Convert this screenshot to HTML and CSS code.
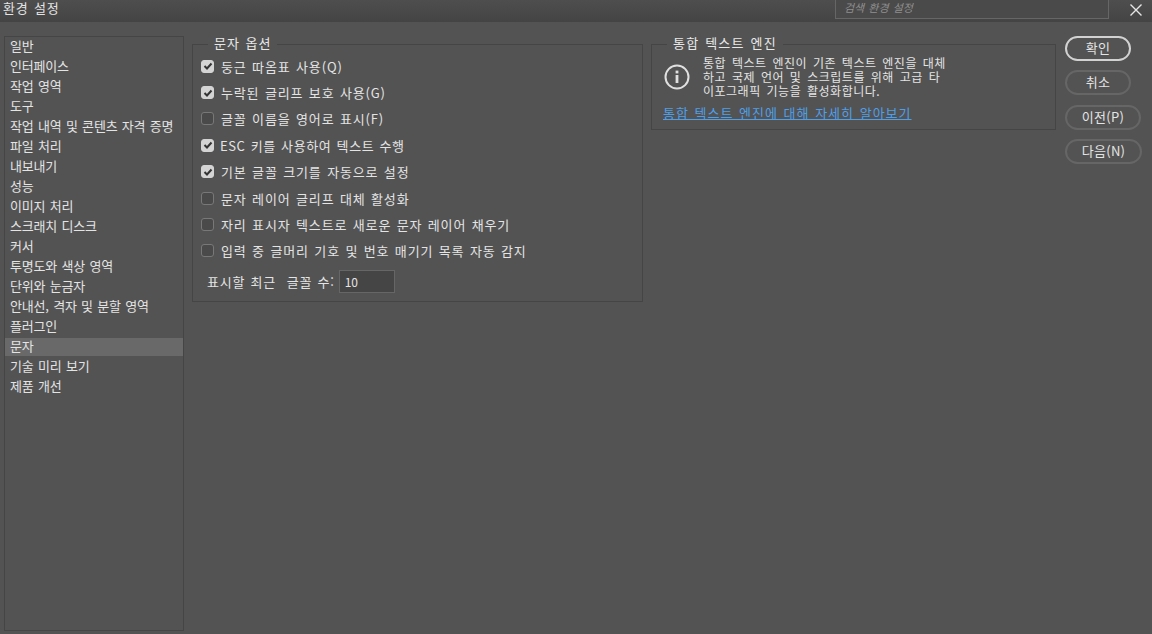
FILE: index.html
```html
<!DOCTYPE html>
<html lang="ko">
<head>
  <meta charset="UTF-8" />
  <title>환경 설정</title>
  <link rel="stylesheet" href="styles.css">
</head>
<body>

  <!-- Title bar -->
  <div class="titlebar">
    <div class="title">환경 설정</div>
    <div class="search">검색 환경 설정</div>
    <svg class="close" width="14" height="14" viewBox="0 0 14 14">
      <path d="M1.5 1.5 L12.5 12.5 M12.5 1.5 L1.5 12.5" stroke="#e6e6e6" stroke-width="1.4" fill="none"/>
    </svg>
  </div>

  <div class="main">
    <!-- Category list -->
    <ul class="sidebar">
      <li>일반</li>
      <li>인터페이스</li>
      <li>작업 영역</li>
      <li>도구</li>
      <li>작업 내역 및 콘텐츠 자격 증명</li>
      <li>파일 처리</li>
      <li>내보내기</li>
      <li>성능</li>
      <li>이미지 처리</li>
      <li>스크래치 디스크</li>
      <li>커서</li>
      <li>투명도와 색상 영역</li>
      <li>단위와 눈금자</li>
      <li>안내선, 격자 및 분할 영역</li>
      <li>플러그인</li>
      <li class="selected">문자</li>
      <li>기술 미리 보기</li>
      <li>제품 개선</li>
    </ul>

    <!-- Type options -->
    <fieldset class="group options">
      <legend>문자 옵션</legend>
      <label class="check"><span class="box on"><svg width="10" height="10" viewBox="0 0 10 10"><path d="M1.5 5 L4 7.5 L8.5 2.5" /></svg></span>둥근 따옴표 사용(Q)</label>
      <label class="check"><span class="box on"><svg width="10" height="10" viewBox="0 0 10 10"><path d="M1.5 5 L4 7.5 L8.5 2.5" /></svg></span>누락된 글리프 보호 사용(G)</label>
      <label class="check"><span class="box"></span>글꼴 이름을 영어로 표시(F)</label>
      <label class="check"><span class="box on"><svg width="10" height="10" viewBox="0 0 10 10"><path d="M1.5 5 L4 7.5 L8.5 2.5" /></svg></span><span class="esc">ESC 키를 사용하여 텍스트 수행</span></label>
      <label class="check"><span class="box on"><svg width="10" height="10" viewBox="0 0 10 10"><path d="M1.5 5 L4 7.5 L8.5 2.5" /></svg></span>기본 글꼴 크기를 자동으로 설정</label>
      <label class="check"><span class="box"></span>문자 레이어 글리프 대체 활성화</label>
      <label class="check"><span class="box"></span>자리 표시자 텍스트로 새로운 문자 레이어 채우기</label>
      <label class="check"><span class="box"></span>입력 중 글머리 기호 및 번호 매기기 목록 자동 감지</label>
      <div class="recent">
        <span>표시할 최근&nbsp; 글꼴 수:</span>
        <span class="num">10</span>
      </div>
    </fieldset>

    <!-- Unified text engine -->
    <fieldset class="group engine">
      <legend>통합 텍스트 엔진</legend>
      <div class="info">
        <svg class="info-icon" width="26" height="26" viewBox="0 0 26 26">
          <circle cx="13" cy="13" r="11.5" fill="none" stroke="#e0e0e0" stroke-width="2"/>
          <rect x="11.6" y="11" width="2.8" height="8" fill="#e0e0e0"/>
          <rect x="11.6" y="6.6" width="2.8" height="2.8" fill="#e0e0e0"/>
        </svg>
        <p>통합 텍스트 엔진이 기존 텍스트 엔진을 대체<br>하고 국제 언어 및 스크립트를 위해 고급 타<br>이포그래픽 기능을 활성화합니다.</p>
      </div>
      <a class="link" href="#">통합 텍스트 엔진에 대해 자세히 알아보기</a>
    </fieldset>

    <!-- Buttons -->
    <div class="buttons">
      <button class="primary">확인</button>
      <button class="short">취소</button>
      <button class="prev">이전(P)</button>
      <button class="next">다음(N)</button>
    </div>
  </div>

</body>
</html>
```

FILE: styles.css
```css
* { box-sizing: border-box; }

html, body {
  height: 100%;
}

body {
  margin: 0;
  display: flex;
  flex-direction: column;
  overflow: hidden;
  background-color: #535353;
  color: #e4e4e4;
  font-family: "Noto Sans CJK KR", "Liberation Sans", sans-serif;
  font-size: 13px;
  word-spacing: 1px;
}

.titlebar {
  height: 22px;
  display: flex;
  align-items: flex-start;
  padding-left: 3px;
  background: linear-gradient(#4e4e4e, #444444);
}

.title {
  flex: 1;
  line-height: 16px;
  letter-spacing: 0.8px;
}

.search {
  width: 274px;
  height: 19px;
  padding-left: 8px;
  border: 1px solid #666666;
  border-top: none;
  background-color: #4a4a4a;
  color: #8f8f8f;
  font-size: 11px;
  font-style: italic;
  line-height: 15px;
}

.close {
  margin: 3px 9px 0 20px;
}

.main {
  flex: 1;
  display: flex;
  align-items: flex-start;
  padding: 14px 0 3px 4px;
  min-height: 0;
}

.sidebar {
  align-self: stretch;
  width: 180px;
  margin: 0;
  padding: 0;
  list-style: none;
  border: 1px solid #454545;
  letter-spacing: -0.2px;
}

.sidebar li {
  height: 20px;
  line-height: 18px;
  padding-left: 5px;
  white-space: nowrap;
}

.sidebar li.selected {
  height: 18px;
  margin: 1px 0;
  line-height: 16px;
  background-color: #696969;
}

.group {
  margin: 0;
  min-width: 0;
  border: 1px solid #454545;
  padding: 0;
}

.group legend {
  padding: 0 6px 4px;
  line-height: 13px;
  color: #e8e8e8;
}

.options {
  width: 451px;
  height: 266px;
  margin-left: 8px;
  padding: 0 0 0 8px;
  letter-spacing: 0.85px;
}

.options legend {
  margin-left: 7px;
  letter-spacing: 1px;
}

.check {
  display: flex;
  align-items: center;
  height: 26.4px;
  white-space: nowrap;
}

.box {
  width: 13px;
  height: 13px;
  margin-right: 7px;
  display: flex;
  align-items: center;
  justify-content: center;
  flex-shrink: 0;
  border: 1px solid #787878;
  border-radius: 3px;
  background-color: #4a4a4a;
}

.box.on {
  border-color: #d4d4d4;
  background-color: #d4d4d4;
}

.box path {
  fill: none;
  stroke: #333333;
  stroke-width: 2;
}

.esc {
  letter-spacing: 0.6px;
  margin-left: -1px;
}

.recent {
  display: flex;
  align-items: center;
  margin-top: 6px;
  padding-left: 6px;
  letter-spacing: 0.75px;
}

.num {
  width: 56px;
  height: 23px;
  margin-left: 4px;
  padding-left: 5px;
  border: 1px solid #666666;
  background-color: #454545;
  line-height: 21px;
  font-size: 12px;
  letter-spacing: 0;
}

.engine {
  width: 405px;
  height: 94px;
  margin-left: 8px;
  padding: 3px 0 0 11px;
}

.engine legend {
  margin-left: 4px;
  letter-spacing: 1.2px;
}

.info {
  display: flex;
  align-items: center;
  padding-left: 1px;
}

.info-icon {
  flex-shrink: 0;
  margin-right: 13px;
}

.info p {
  margin: 0;
  font-size: 12px;
  line-height: 14px;
  word-spacing: 2px;
  letter-spacing: 0.5px;
}

.link {
  display: block;
  margin-top: 7px;
  color: #4f9fe8;
  line-height: 16px;
  letter-spacing: 1px;
}

.buttons {
  display: flex;
  flex-direction: column;
  align-items: flex-start;
  gap: 9px;
  margin-left: 9px;
}

.buttons button {
  width: 77px;
  height: 25px;
  margin: 0;
  padding: 0 0 2px;
  border: 2px solid #666666;
  border-radius: 13px;
  background: transparent;
  color: #e4e4e4;
  font: inherit;
  word-spacing: inherit;
  letter-spacing: 0.3px;
}

.buttons button.primary {
  width: 66px;
  border-color: #d2d2d2;
}

.buttons button.short {
  width: 66px;
}

.buttons button.prev {
  width: 76px;
  margin-top: 1px;
}
```
